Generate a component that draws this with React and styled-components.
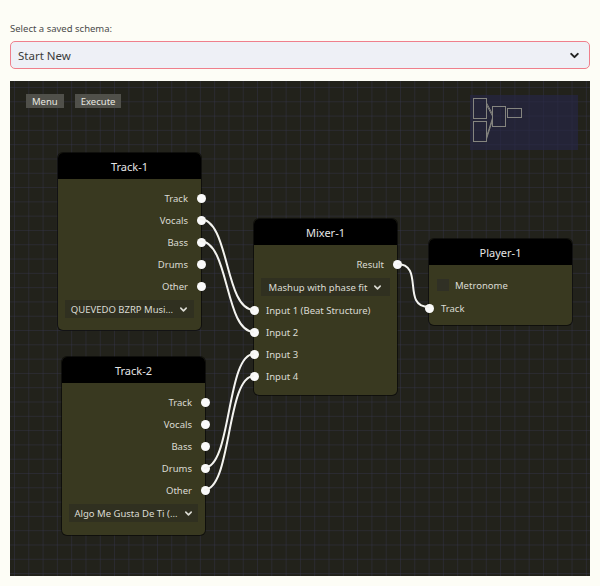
import React from 'react'
import styled, { createGlobalStyle } from 'styled-components'

const GlobalStyle = createGlobalStyle`
    html, body {
        margin: 0;
        padding: 0;
        background: #fdfdf6;
        font-family: "Noto Sans", "Open Sans", sans-serif;
    }
`;

const nodes = [
    {
        id: 'track1', title: 'Track-1', left: 48, top: 72, height: 177,
        outputs: ['Track', 'Vocals', 'Bass', 'Drums', 'Other'],
        select: 'QUEVEDO BZRP Musi...'
    },
    {
        id: 'track2', title: 'Track-2', left: 52, top: 276, height: 178,
        outputs: ['Track', 'Vocals', 'Bass', 'Drums', 'Other'],
        select: 'Algo Me Gusta De Ti (...'
    },
    {
        id: 'mixer', title: 'Mixer-1', left: 244, top: 138, height: 176,
        outputs: ['Result'],
        select: 'Mashup with phase fit',
        inputs: ['Input 1 (Beat Structure)', 'Input 2', 'Input 3', 'Input 4']
    },
    {
        id: 'player', title: 'Player-1', left: 419, top: 158, height: 86,
        checkbox: 'Metronome',
        inputs: ['Track']
    },
];

const wires = [
    [190, 138, 244, 229],
    [190, 160, 244, 251],
    [194, 387, 244, 273],
    [194, 409, 244, 295],
    [387, 183, 419, 226],
];

const curve = ([x1, y1, x2, y2]) => {
    const dx = Math.max(28, (x2 - x1) * 0.55);
    return `M${x1},${y1} C${x1 + dx},${y1} ${x2 - dx},${y2} ${x2},${y2}`;
};

const Chevron = () => (
    <svg width="9" height="9" viewBox="0 0 10 10">
        <path d="M2 3.5 L5 6.5 L8 3.5" fill="none" stroke="currentColor" strokeWidth="1.8" strokeLinecap="round" strokeLinejoin="round" />
    </svg>
);

const NodeBox = ({ node }) => (
    <Node style={{ left: node.left, top: node.top, height: node.height }}>
        <NodeHeader>{node.title}</NodeHeader>
        <NodeBody>
            {node.outputs && node.outputs.map(o => (
                <OutRow key={o}>{o}<Port side="right" /></OutRow>
            ))}
            {node.checkbox && (
                <CheckRow>
                    <CheckBox />
                    {node.checkbox}
                </CheckRow>
            )}
            {node.select && (
                <NodeSelect>
                    <span>{node.select}</span>
                    <Chevron />
                </NodeSelect>
            )}
            {node.inputs && node.inputs.map(i => (
                <InRow key={i}><Port side="left" />{i}</InRow>
            ))}
        </NodeBody>
    </Node>
);

const App = () => (
    <>
        <GlobalStyle />
        <Page>
            <Label>Select a saved schema:</Label>
            <SchemaSelect>
                <span>Start New</span>
                <Chevron />
            </SchemaSelect>
            <Canvas>
                <Toolbar>
                    <ToolButton>Menu</ToolButton>
                    <ToolButton>Execute</ToolButton>
                </Toolbar>
                <MiniMap>
                    <svg width="108" height="55" viewBox="0 0 108 55">
                        <g fill="none" stroke="#85857f" strokeWidth="1">
                            <rect x="3.5" y="3.5" width="13" height="20" />
                            <rect x="3.5" y="26.5" width="13" height="20" />
                            <rect x="22.5" y="11.5" width="13" height="20" />
                            <rect x="37.5" y="13.5" width="14" height="9" />
                            <path d="M16.5 8 L22.5 19 M16.5 10 L22.5 21 M16.5 42 L22.5 23 M16.5 44 L22.5 25" />
                        </g>
                    </svg>
                </MiniMap>
                <Wires width="580" height="495">
                    {wires.map((w, i) => (
                        <path key={i} d={curve(w)} fill="none" stroke="#f4f4f0" strokeWidth="2" />
                    ))}
                </Wires>
                {nodes.map(n => <NodeBox key={n.id} node={n} />)}
            </Canvas>
        </Page>
    </>
);

const Page = styled.div`
    padding: 22px 10px 10px;
    display: flex;
    flex-direction: column;
`;

const Label = styled.div`
    font-size: 9.5px;
    color: #4a4a4a;
    margin-bottom: 6px;
`;

const SchemaSelect = styled.div`
    height: 28px;
    box-sizing: border-box;
    border: 1px solid #ef7f8c;
    border-radius: 5px;
    background: #eef0f6;
    padding: 0 9px 0 7px;
    display: flex;
    align-items: center;
    justify-content: space-between;
    font-size: 11.5px;
    color: #3a3a3a;
    margin-bottom: 12px;

    svg { width: 11px; height: 11px; color: #222; }
`;

const Canvas = styled.div`
    position: relative;
    height: 495px;
    overflow: hidden;
    background-color: #22221b;
    background-image:
        linear-gradient(to right, rgba(55, 55, 80, 0.4) 1px, transparent 1px),
        linear-gradient(to bottom, rgba(55, 55, 80, 0.4) 1px, transparent 1px);
    background-size: 14.3px 14.3px;
    background-position: 4px 6px;
`;

const Toolbar = styled.div`
    position: absolute;
    left: 16px;
    top: 13px;
    display: flex;
    gap: 11px;
`;

const ToolButton = styled.div`
    height: 14px;
    padding: 0 6px;
    display: flex;
    align-items: center;
    background: #50504a;
    color: #e8e8e0;
    font-size: 9.5px;
`;

const MiniMap = styled.div`
    position: absolute;
    right: 12px;
    top: 14px;
    width: 108px;
    height: 55px;
    background: rgba(38, 38, 70, 0.65);

    svg { display: block; }
`;

const Wires = styled.svg`
    position: absolute;
    left: 0;
    top: 0;
    pointer-events: none;
    z-index: 2;
`;

const Node = styled.div`
    position: absolute;
    width: 143px;
    box-sizing: border-box;
    background: #393920;
    border-radius: 5px;
    box-shadow: 0 0 0 1px rgba(0, 0, 0, 0.55);
    display: flex;
    flex-direction: column;
    color: #dcdcd4;
    z-index: 1;
`;

const NodeHeader = styled.div`
    height: 26px;
    background: #000;
    border-radius: 5px 5px 0 0;
    display: flex;
    align-items: center;
    justify-content: center;
    font-size: 11px;
    color: #e6e6e6;
`;

const NodeBody = styled.div`
    display: flex;
    flex-direction: column;
    padding-top: 8px;
`;

const Row = styled.div`
    position: relative;
    height: 22px;
    display: flex;
    align-items: center;
    font-size: 9.5px;
`;

const OutRow = styled(Row)`
    justify-content: flex-end;
    padding-right: 13px;
`;

const InRow = styled(Row)`
    padding-left: 12px;
`;

const CheckRow = styled(Row)`
    padding-left: 8px;
    gap: 6px;
    height: 24px;
`;

const CheckBox = styled.div`
    width: 12px;
    height: 12px;
    background: #303025;
`;

const Port = styled.span`
    position: absolute;
    top: 50%;
    ${p => p.side === 'right' ? 'right: -4.5px;' : 'left: -4.5px;'}
    width: 9px;
    height: 9px;
    margin-top: -4.5px;
    border-radius: 50%;
    background: #fafafa;
    z-index: 3;
`;

const NodeSelect = styled.div`
    height: 18px;
    margin: 3px 7px 3px;
    padding: 0 6px;
    background: #303020;
    display: flex;
    align-items: center;
    justify-content: center;
    gap: 6px;
    font-size: 9.5px;
    white-space: nowrap;

    svg { flex-shrink: 0; }
`;

export default App
